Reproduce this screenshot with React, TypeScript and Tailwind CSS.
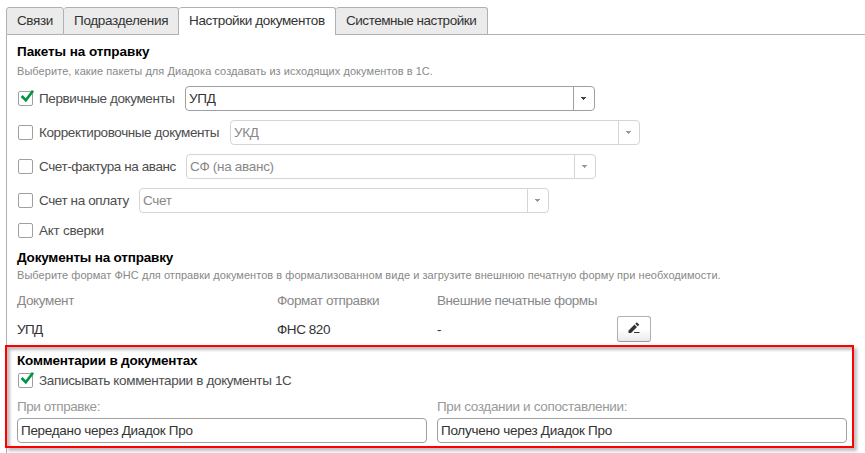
import type { ReactNode } from 'react';

function Check({ checked = false }: { checked?: boolean }) {
  return (
    <span className="relative ml-px mr-[6px] block h-[15px] w-[15px] shrink-0 rounded-[2px] border border-[#a0a0a0] bg-white">
      {checked && (
        <svg className="absolute -left-px -top-[3px] h-[17px] w-[17px]" viewBox="0 0 17 17">
          <path d="M3.6 7 L7.8 11.2 L15 1.8" fill="none" stroke="#009646" strokeWidth="2.7" />
        </svg>
      )}
    </span>
  );
}

function Select({ value, active = false }: { value: string; active?: boolean }) {
  const tone = active ? 'border-[#a0a0a0] text-[#333]' : 'border-[#d5d5d5] text-[#888]';
  return (
    <div className={`flex h-[25px] w-[410px] shrink-0 rounded-[4px] border ${tone}`}>
      <span className="flex-1 pl-[3px] leading-[23px] tracking-[-0.3px]">{value}</span>
      <span className={`flex w-[21px] items-center justify-center border-l pr-px ${tone}`}>
        <svg className="h-[3px] w-[5px]" viewBox="0 0 5 3" shapeRendering="crispEdges">
          <path d="M0 0H5V1H4V2H3V3H2V2H1V1H0Z" fill={active ? '#444' : '#999'} />
        </svg>
      </span>
    </div>
  );
}

function PackageRow({ label, width, children, checked }: { label: string; width: string; children?: ReactNode; checked?: boolean }) {
  return (
    <div className="flex h-[25px] items-center">
      <Check checked={checked} />
      <span className={`shrink-0 text-[#4d4d4d] ${width}`}>{label}</span>
      {children}
    </div>
  );
}

const tab = 'h-[28px] shrink-0 rounded-t-[3px] border-t border-r border-[#b0b0b0] pl-[10px] leading-[25px] text-[#333]';

export default function App() {
  return (
    <div className="relative h-[453px] w-[865px] overflow-hidden whitespace-nowrap bg-white pl-[6px] pt-[7px] font-['Liberation_Sans',Arial,sans-serif] text-[13.5px] leading-4">
      <div className="flex h-[28px]">
        <div className={`${tab} w-[58px] border-b border-l bg-[#ebebeb] tracking-[-0.38px]`}>Связи</div>
        <div className={`${tab} w-[115px] border-b bg-[#ebebeb] tracking-[-0.31px]`}>Подразделения</div>
        <div className={`${tab} w-[157px] bg-white tracking-[-0.36px]`}>Настройки документов</div>
        <div className={`${tab} w-[152px] border-b bg-[#ebebeb] tracking-[-0.47px]`}>Системные настройки</div>
        <div className="flex-1 border-b border-[#b0b0b0]" />
      </div>
      <main className="h-[418px] border-l border-[#b0b0b0] pl-[10px] pt-[9px]">
        <section>
          <h2 className="h-4 font-bold tracking-[-0.07px] text-black">Пакеты на отправку</h2>
          <p className="mt-[3px] h-4 text-[11px] tracking-[0.06px] text-[#888]">Выберите, какие пакеты для Диадока создавать из исходящих документов в 1С.</p>
          <div className="mt-[7px] flex flex-col gap-[9px]">
            <PackageRow label="Первичные документы" width="w-[146px] tracking-[-0.39px]" checked><Select value="УПД" active /></PackageRow>
            <PackageRow label="Корректировочные документы" width="w-[191px] tracking-[-0.4px]"><Select value="УКД" /></PackageRow>
            <PackageRow label="Счет-фактура на аванс" width="w-[147px] tracking-[-0.42px]"><Select value="СФ (на аванс)" /></PackageRow>
            <PackageRow label="Счет на оплату" width="w-[100px] tracking-[-0.4px]"><Select value="Счет" /></PackageRow>
          </div>
          <div className="mt-[5px]">
            <PackageRow label="Акт сверки" width="w-[100px] tracking-[-0.25px]" />
          </div>
        </section>
        <section className="mt-[7px]">
          <h2 className="h-4 font-bold tracking-[-0.19px] text-black">Документы на отправку</h2>
          <p className="mt-px h-4 text-[11px] tracking-[0.045px] text-[#888]">Выберите формат ФНС для отправки документов в формализованном виде и загрузите внешнюю печатную форму при необходимости.</p>
          <div className="mt-[10px] grid h-4 grid-cols-[260px_160px_180px] text-[#888]">
            <span className="tracking-[-0.36px]">Документ</span>
            <span className="tracking-[-0.4px]">Формат отправки</span>
            <span className="tracking-[-0.43px]">Внешние печатные формы</span>
          </div>
          <div className="mt-[7px] grid h-[26px] grid-cols-[260px_160px_180px_34px] items-center text-[#333]">
            <span className="pt-[2px] tracking-[-0.6px]">УПД</span>
            <span className="pt-[2px] tracking-[-0.43px]">ФНС 820</span>
            <span className="pt-[2px]">-</span>
            <button className="flex h-[26px] w-[34px] items-center justify-center rounded-[3px] border border-[#b0b0b0] border-b-[#999] bg-linear-to-b from-white from-50% to-[#ebebeb]">
              <svg className="mb-[2px] h-[12px] w-[12px]" viewBox="0 0 12 12">
                <path d="M.5 8.5 L6.5 2.5 L9 5 L3 11 H.5Z M7.3 1.7 L8.8.2 L11.3 2.7 L9.8 4.2Z M6 10H11.5V11H6Z" fill="#333" />
              </svg>
            </button>
          </div>
        </section>
        <section className="mt-[11px]">
          <h2 className="h-4 font-bold tracking-[-0.19px] text-black">Комментарии в документах</h2>
          <div className="mt-[4px] flex h-[15px] items-center text-[#4d4d4d]">
            <Check checked />
            <span className="tracking-[-0.345px]">Записывать комментарии в документы 1С</span>
          </div>
          <div className="mt-[10px] flex gap-[10px]">
            <label className="block w-[410px] text-[#999]">
              <span className="block h-5 leading-[17px] tracking-[-0.44px]">При отправке:</span>
              <span className="block h-[25px] rounded-[4px] border border-[#a0a0a0] pl-[3px] leading-[23px] tracking-[-0.3px] text-[#333]">Передано через Диадок Про</span>
            </label>
            <label className="block w-[410px] text-[#999]">
              <span className="block h-5 leading-[17px] tracking-[-0.33px]">При создании и сопоставлении:</span>
              <span className="block h-[25px] rounded-[4px] border border-[#a0a0a0] pl-[3px] leading-[23px] tracking-[-0.28px] text-[#333]">Получено через Диадок Про</span>
            </label>
          </div>
        </section>
      </main>
      <div className="pointer-events-none absolute left-[5px] top-[345px] h-[103px] w-[849px] border-2 border-[#ff0000] shadow-[3px_3px_3px_rgba(0,0,0,0.25),inset_3px_3px_3px_rgba(0,0,0,0.25)]" />
    </div>
  );
}
